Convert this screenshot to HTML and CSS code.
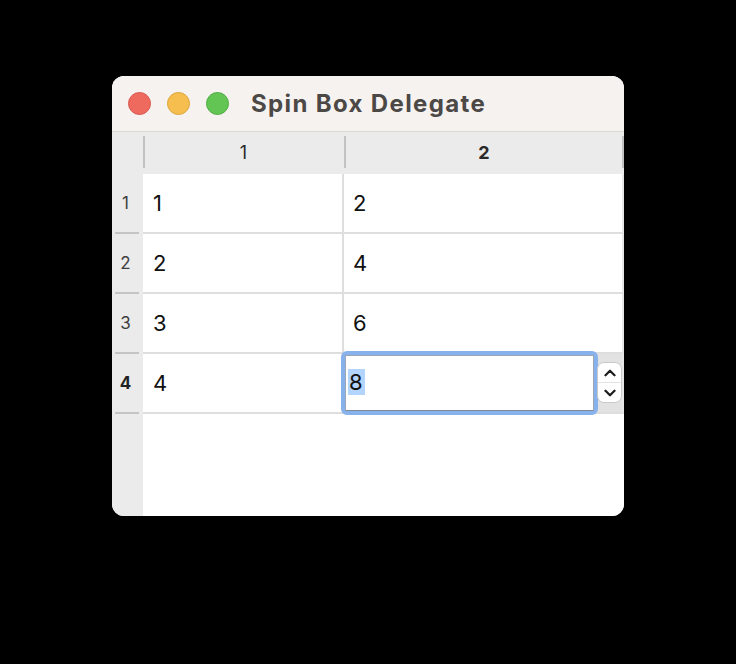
FILE: index.html
```html
<!DOCTYPE html>
<html>
<head>
<meta charset="utf-8">
<link rel="stylesheet" href="styles.css">
</head>
<body>
<div class="window">
  <div class="titlebar">
    <span class="light red"></span>
    <span class="light yellow"></span>
    <span class="light green"></span>
    <span class="title">Spin Box Delegate</span>
  </div>
  <div class="table">
    <div class="corner"></div>
    <div class="hcell"><span>1</span></div>
    <div class="hcell last bold"><span>2</span></div>

    <div class="vcell">1</div>
    <div class="cell c1">1</div>
    <div class="cell c2">2</div>

    <div class="vcell">2</div>
    <div class="cell c1">2</div>
    <div class="cell c2">4</div>

    <div class="vcell">3</div>
    <div class="cell c1">3</div>
    <div class="cell c2">6</div>

    <div class="vcell bold">4</div>
    <div class="cell c1">4</div>
    <div class="cell c2 editing">
      <div class="editor"><div class="field"><span class="sel">8</span></div></div>
      <div class="stepper">
        <svg class="chev" width="12" height="8" viewBox="0 0 12 8"><path d="M1.5 6.2 L6 1.8 L10.5 6.2" fill="none" stroke="#1e1e1e" stroke-width="2.3" stroke-linecap="round" stroke-linejoin="round"/></svg>
        <div class="stepdiv"></div>
        <svg class="chev" width="12" height="8" viewBox="0 0 12 8"><path d="M1.5 1.8 L6 6.2 L10.5 1.8" fill="none" stroke="#1e1e1e" stroke-width="2.3" stroke-linecap="round" stroke-linejoin="round"/></svg>
      </div>
    </div>

    <div class="vfill"></div>
    <div class="fill"></div>
  </div>
</div>
</body>
</html>
```

FILE: styles.css
```css
html, body {
  margin: 0;
  padding: 0;
  background: #000;
}
body {
  width: 736px;
  height: 664px;
  padding-top: 76px;
  padding-left: 112px;
  box-sizing: border-box;
  font-family: Inter, "Liberation Sans", sans-serif;
}
.window {
  width: 512px;
  height: 440px;
  border-radius: 12px;
  overflow: hidden;
  background: #fff;
  display: flex;
  flex-direction: column;
}
.titlebar {
  height: 55px;
  flex: none;
  background: #f6f2ef;
  border-bottom: 1px solid #dcd8d4;
  display: flex;
  align-items: center;
  padding-left: 16px;
  gap: 16px;
  box-sizing: content-box;
}
.light {
  width: 23px;
  height: 23px;
  border-radius: 50%;
  box-sizing: border-box;
}
.red { background: #ee6a5f; border: 1px solid #d9584e; }
.yellow { background: #f5be4f; border: 1px solid #dca63b; }
.green { background: #62c554; border: 1px solid #52ad45; }
.title {
  margin-left: 6px;
  font-weight: 700;
  font-size: 24px;
  color: #4b4846;
  letter-spacing: 1.35px;
  padding-bottom: 1px;
}
.table {
  flex: 1;
  display: grid;
  grid-template-columns: 31px 201px 280px;
  grid-template-rows: 42px 60px 60px 60px 60px 1fr;
}
.corner {
  background: #ebebeb;
}
.hcell {
  display: flex;
  align-items: center;
  justify-content: center;
  font-size: 18px;
  color: #2a2a2a;
  background-color: #ebebeb;
  background-image: linear-gradient(#c2c2c2, #c2c2c2);
  background-size: 2px 32px;
  background-position: 0 4px;
  background-repeat: no-repeat;
}
.hcell.last {
  background-image: linear-gradient(#c2c2c2, #c2c2c2), linear-gradient(#c2c2c2, #c2c2c2);
  background-size: 2px 32px, 2px 32px;
  background-position: 0 4px, 278px 4px;
}
.hcell span { padding-bottom: 2px; }
.bold { font-weight: 700; }
.vcell {
  display: flex;
  align-items: center;
  justify-content: center;
  font-size: 17px;
  color: #3e3e3e;
  padding-right: 4px;
  padding-bottom: 2px;
  background-color: #ebebeb;
  background-image: linear-gradient(#c4c4c4, #c4c4c4);
  background-size: 24px 2px;
  background-position: 3px 58px;
  background-repeat: no-repeat;
  box-sizing: border-box;
}
.vcell.bold { color: #222; }
.cell {
  background: #fff;
  border-bottom: 2px solid #dedede;
  display: flex;
  align-items: center;
  padding-left: 10px;
  font-size: 22px;
  color: #111;
  padding-bottom: 1px;
}
.c1 { border-right: 2px solid #dedede; }
.c2 { border-right: 2px solid #e6e6e6; padding-left: 9px; }
.editing {
  position: relative;
  background: #e2e2e2;
}
.editor {
  position: absolute;
  left: -3px;
  top: -3px;
  width: 257px;
  height: 64px;
  box-sizing: border-box;
  border: 4px solid #88b2ec;
  border-radius: 6px;
  background: #fff;
}
.field {
  height: 100%;
  box-sizing: border-box;
  border: 1px solid #9aa6b6;
  border-bottom-color: #7f8a99;
  display: flex;
  align-items: center;
  padding-left: 2px;
  padding-bottom: 2px;
}
.sel {
  background: #b3d4fc;
  font-size: 22px;
  color: #111;
  padding: 0 2px 0 1px;
  line-height: 26px;
}
.stepper {
  position: absolute;
  left: 253px;
  top: 8px;
  width: 25px;
  height: 41px;
  box-sizing: border-box;
  background: #fff;
  border: 1px solid #c9c9c9;
  border-radius: 7px;
  display: flex;
  flex-direction: column;
  align-items: center;
  justify-content: space-evenly;
}
.stepdiv {
  width: 100%;
  height: 1px;
  background: #e4e4e4;
}
.chev { display: block; }
.vfill { background: #ebebeb; }
.fill { grid-column: 2 / 4; background: #fff; }
```
